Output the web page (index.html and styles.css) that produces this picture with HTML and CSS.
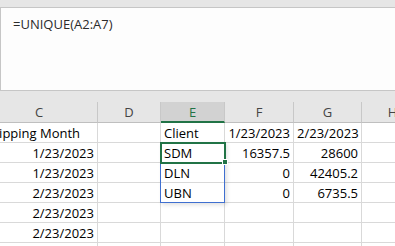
FILE: index.html
```html
<!DOCTYPE html>
<html lang="en">
<head>
    <meta charset="UTF-8">
    <title>UNIQUE</title>
    <link rel="stylesheet" href="styles.css">
</head>
<body>

<div class="topbar"></div>
<div class="formula">=UNIQUE(A2:A7)</div>
<div class="gap"></div>

<div class="sheet">
    <!-- column headers -->
    <div class="hd">C</div>
    <div class="hd">D</div>
    <div class="hd active">E</div>
    <div class="hd">F</div>
    <div class="hd">G</div>
    <div class="hd">H</div>

    <div class="c">Shipping Month</div>
    <div class="c"></div>
    <div class="c">Client</div>
    <div class="c r">1/23/2023</div>
    <div class="c r">2/23/2023</div>
    <div class="c"></div>

    <div class="c r">1/23/2023</div>
    <div class="c"></div>
    <div class="c sel-cell">SDM
        <div class="spill"></div>
        <div class="sel"></div>
        <div class="handle"></div>
    </div>
    <div class="c r">16357.5</div>
    <div class="c r">28600</div>
    <div class="c"></div>

    <div class="c r">1/23/2023</div>
    <div class="c"></div>
    <div class="c">DLN</div>
    <div class="c r">0</div>
    <div class="c r">42405.2</div>
    <div class="c"></div>

    <div class="c r">2/23/2023</div>
    <div class="c"></div>
    <div class="c">UBN</div>
    <div class="c r">0</div>
    <div class="c r">6735.5</div>
    <div class="c"></div>

    <div class="c r">2/23/2023</div>
    <div class="c"></div>
    <div class="c"></div>
    <div class="c"></div>
    <div class="c"></div>
    <div class="c"></div>

    <div class="c r">2/23/2023</div>
    <div class="c"></div>
    <div class="c"></div>
    <div class="c"></div>
    <div class="c"></div>
    <div class="c"></div>

    <div class="c"></div>
    <div class="c"></div>
    <div class="c"></div>
    <div class="c"></div>
    <div class="c"></div>
    <div class="c"></div>
</div>

</body>
</html>
```

FILE: styles.css
```css
body {
    margin: 0;
    height: 246px;
    overflow: hidden;
    background: #ffffff;
    font-family: "Open Sans", "Noto Sans", sans-serif;
}
.topbar {
    height: 7px;
    background: #e6e6e6;
}
.formula {
    height: 84px;
    border-top: 1px solid #c6c6c6;
    border-left: 1px solid #c6c6c6;
    border-bottom: 1px solid #c6c6c6;
    background: #fdfdfd;
    padding: 7px 0 0 12px;
    box-sizing: border-box;
    font-size: 13px;
    color: #2b2b2b;
}
.gap {
    height: 11px;
    background: #e6e6e6;
}
.sheet {
    display: grid;
    grid-template-columns: 117px 63px 64px 69px 68px 62px;
    grid-template-rows: 21px;
    grid-auto-rows: 20px;
    margin-left: -19px;
    font-size: 13px;
    color: #000000;
}
.hd {
    background: #e6e6e6;
    border-right: 1px solid #c8c8c8;
    border-bottom: 1px solid #bfbfbf;
    box-sizing: border-box;
    text-align: center;
    line-height: 20px;
    font-size: 13px;
    color: #444444;
}
.hd.active {
    background: #d2d2d2;
    color: #217346;
    border-bottom: 2px solid #217346;
}
.c {
    border-right: 1px solid #d9d9d9;
    border-bottom: 1px solid #d9d9d9;
    box-sizing: border-box;
    padding: 0 3px;
    line-height: 20px;
    white-space: nowrap;
    overflow: hidden;
}
.c.r {
    text-align: right;
}
.sel-cell {
    position: relative;
    overflow: visible;
}
.spill {
    position: absolute;
    left: -1px;
    top: -1px;
    width: 65px;
    height: 61px;
    border: 1px solid #3f6fd0;
    box-sizing: border-box;
    box-shadow: 2px 2px 4px rgba(0, 0, 0, 0.12);
}
.sel {
    position: absolute;
    left: -1px;
    top: -1px;
    width: 66px;
    height: 22px;
    border: 2px solid #217346;
    box-sizing: border-box;
}
.handle {
    position: absolute;
    left: 61px;
    top: 16px;
    width: 6px;
    height: 6px;
    background: #217346;
    border: 1px solid #ffffff;
    box-sizing: border-box;
}
```
